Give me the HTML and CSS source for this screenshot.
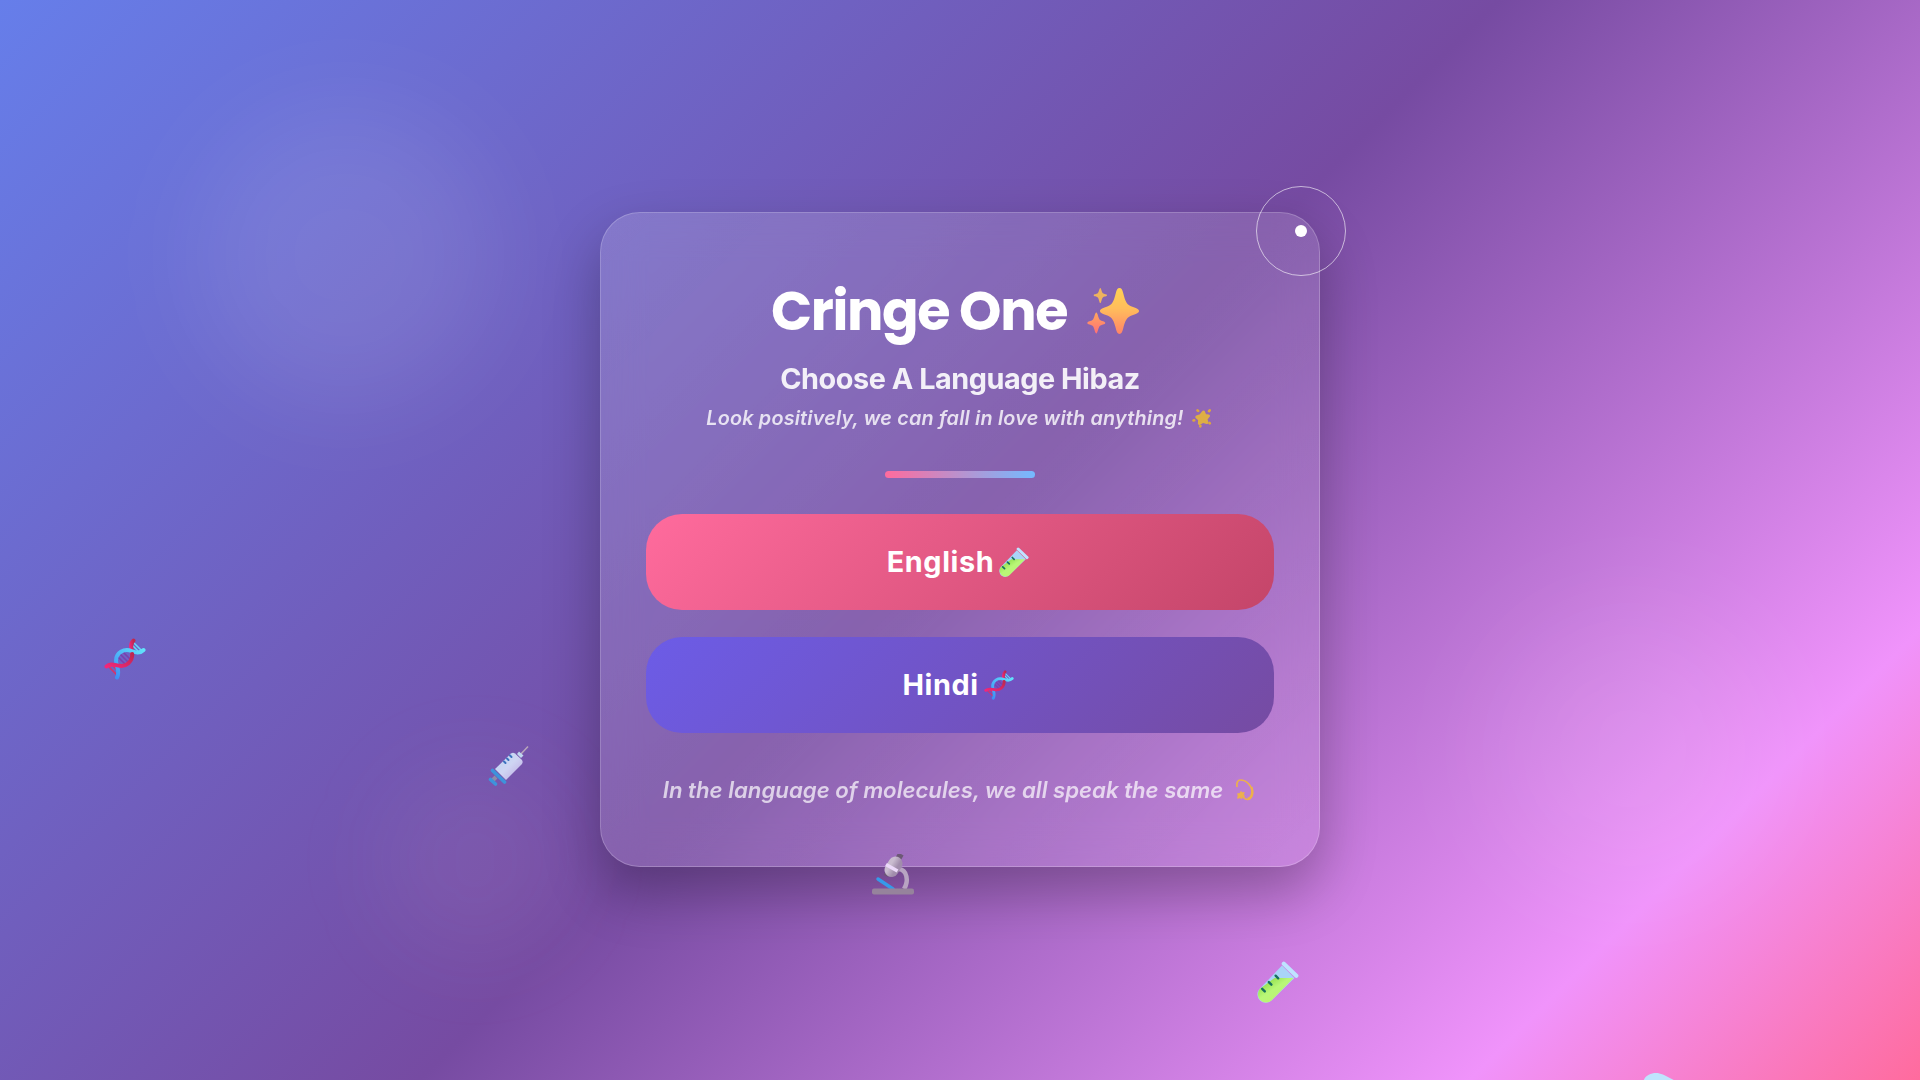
FILE: index.html
```html
<!DOCTYPE html>
<html lang="en">
<head>
<meta charset="utf-8">
<title>Cringe One</title>
<link rel="stylesheet" href="styles.css">
</head>
<body>
<svg class="defs" width="0" height="0">
  <defs>
    <linearGradient id="gold" x1="0" y1="0" x2="0" y2="1"><stop offset="0" stop-color="#ffd153"/><stop offset=".45" stop-color="#ffbd5c"/><stop offset="1" stop-color="#ff8467"/></linearGradient>
    <linearGradient id="coral" x1="0" y1="0" x2="0" y2="1"><stop offset="0" stop-color="#ffa75d"/><stop offset="1" stop-color="#ff7076"/></linearGradient>
    <linearGradient id="liquid" x1="0" y1="0" x2="1" y2="1"><stop offset="0" stop-color="#79cf31"/><stop offset=".45" stop-color="#b8f777"/><stop offset="1" stop-color="#c3f06c"/></linearGradient>
    <linearGradient id="blue" x1="0" y1="1" x2="1" y2="0"><stop offset="0" stop-color="#3c91f5"/><stop offset="1" stop-color="#62e3fb"/></linearGradient>
    <linearGradient id="red" x1="0" y1="1" x2="1" y2="0"><stop offset="0" stop-color="#f3267b"/><stop offset="1" stop-color="#bd294f"/></linearGradient>
    <linearGradient id="barrel" x1="0" y1="0" x2="1" y2="1"><stop offset="0" stop-color="#b9d6f1"/><stop offset=".5" stop-color="#cfd5f3"/><stop offset="1" stop-color="#bba4e0"/></linearGradient>
    <linearGradient id="metal" x1="0" y1="0" x2="1" y2="1"><stop offset="0" stop-color="#c9bccf"/><stop offset="1" stop-color="#a18dac"/></linearGradient>
    <symbol id="sparkles" viewBox="0 0 52 48">
      <path fill="url(#gold)" d="M32.500 1c2 0 2.900 1.800 3.800 5.500 2 8 3.500 11.500 9 13.300C49.500 21.300 52 22 52 24s-2.500 2.800-6.700 4.200c-5.500 1.800-7 5-9 12.800-.9 3.700-1.800 6-3.800 6s-2.900-2.300-3.800-6c-2-7.800-3.500-11-9-12.800C15.500 26.800 13 26 13 24s2.500-2.700 6.700-4.200c5.500-1.800 7-5.300 9-13.300.9-3.700 1.800-5.500 3.800-5.500z"/>
      <path fill="#eeb35e" d="M13.300 1c1 0 1.300 4.200 2.600 5.300C17 7.300 20 7 20 8.200s-3 1.100-4.100 2.200c-1.300 1.100-1.600 5.600-2.600 5.600s-1.300-4.500-2.600-5.600C9.600 9.300 6.700 9.400 6.700 8.200s2.900-.9 4-1.900C12 5.200 12.300 1 13.300 1z"/>
      <path fill="url(#coral)" d="M9.300 25.500c1.400 0 1.800 5.500 3.500 7.200 1.500 1.500 5.500 1.500 5.500 3.300s-4 1.500-5.500 3c-1.700 1.700-2.100 7.500-3.500 7.500S7.500 40.700 5.800 39C4.300 37.500.3 37.800.3 36s4-1.800 5.500-3.300c1.700-1.700 2.100-7.200 3.500-7.200z"/>
    </symbol>
    <symbol id="tube" viewBox="0 0 42 42">
      <path fill="#a9d4f8" d="M25 4.500 37.500 17 15 39a8.300 8.300 0 0 1-12.500-11z"/>
      <path fill="url(#liquid)" d="M17.500 16.500h19L14.500 38.800A8.200 8.200 0 0 1 2.700 27.500z" transform="translate(0 .6)"/>
      <path stroke="#bfe3ff" stroke-width="4.200" stroke-linecap="round" d="m26.800 2.800 12.500 12"/>
      <path stroke="#16705e" stroke-width="2.400" stroke-linecap="round" d="m5.200 27.800 2.600 2.600m4-9.300 2.600 2.600m4.200-9 2.600 2.600"/>
    </symbol>
    <symbol id="dna" viewBox="0 0 42 42">
      <path stroke="#dc3164" stroke-width="1.600" d="m5 29 8 8m-4-9 5 5"/>
      <path stroke="#7a3fae" stroke-width="1.600" d="m19 14 8 8m-11-6 9 9m-11-6 8 8"/>
      <path stroke="#66d9fa" stroke-width="1.600" d="m29 4 9 9m-10-6 6 6"/>
      <g fill="none" stroke-width="4" stroke-linecap="round">
        <path stroke="url(#red)" d="M29.500 2.500C25 7 28 11 28.200 16"/>
        <path stroke="url(#blue)" d="M39.500 12c-4 4-8 2.500-12 1C20 10 12 15 12 22.500 12 29 16.500 33 13 39.500"/>
        <path stroke="url(#red)" d="M28.200 16c.3 8-6.200 12.500-12.200 11.800C10 27 6.500 25 2.500 28.500"/>
      </g>
    </symbol>
    <symbol id="syringe" viewBox="0 0 42 42">
      <path stroke="#b9a6bb" stroke-width="1.500" d="m31 11 9-9.500"/>
      <path fill="#bfd6ef" d="m29 9 2-2.500 4.500 4L33 13z"/>
      <path fill="url(#barrel)" d="M23 8.500q2-1.500 4 0L34 15q1.500 2 0 4L18 35 7 24z"/>
      <path stroke="#8e8ba9" stroke-width="4" d="m8 32-3 3"/>
      <path stroke="#3e93db" stroke-width="3.600" stroke-linecap="round" d="m4.500 25.500 12 11.500M2.500 34.500l5 4.500"/>
      <path stroke="#3b72bf" stroke-width="2" stroke-linecap="round" d="m16 16.500 1.500 1.500m1.500-4.500 1.500 1.500m1.500-4.500 1.500 1.500"/>
    </symbol>
    <symbol id="microscope" viewBox="0 0 42 42">
      <path fill="none" stroke="#b8a4c2" stroke-width="4.500" d="M27 15c8 1 10 12 5 20"/>
      <path stroke="#359ae9" stroke-width="3.500" stroke-linecap="round" d="m6 25 15 10"/>
      <path stroke="#6c5875" stroke-width="6" d="m26 5 3-5"/>
      <path stroke="#6c5875" stroke-width="5" d="m15.500 19-1.500 3"/>
      <path stroke="url(#metal)" stroke-width="14" stroke-linecap="round" d="m23.500 9.500-4 6.500"/>
      <path stroke="#ecd9fa" stroke-width="3.500" d="m14 10.500 11.500 6.500"/>
      <rect y="34.500" width="42" height="6" rx="2" fill="#96839c"/>
    </symbol>
    <symbol id="star" viewBox="0 0 20 20">
      <path fill="#deae45" stroke="#deae45" stroke-width="3" stroke-linejoin="round" d="m11.500 4 1.500 3.500 3.500.4-2.600 3.100 1 3.500-4-1.300-3.500 2.300.2-4.100L4.800 9l3.800-1.400z"/>
      <path stroke="#dda63e" stroke-width="2.600" stroke-linecap="round" d="m5.500 2.300.6.600M17.700 2.300l-.7.800M1.500 12.500l.7-.2M17.500 15l.3.300M8.300 18.300l.1-.3"/>
    </symbol>
    <symbol id="dizzy" viewBox="0 0 18 22">
      <path fill="none" stroke="#edb04c" stroke-width="1.700" stroke-linecap="round" d="M1 7.500C.5 4 1.500 1 4.500 1c6 0 11.500 6 12 12 .2 4-2 7.500-5 7.500-1.500 0-2.500-.5-4-2"/>
      <path fill="#edb04c" stroke="#edb04c" stroke-linejoin="round" d="m5 12.500 1 1.500 2.200-.5-.8 2.200 1.200 1.600-2.300.3-.6 2.100-1.600-1.200-2.400.8.500-2.400-.5-2.200 2 .1z"/>
      <path fill="none" stroke="#edb04c" stroke-width="2.400" d="M15.500 8c1.500 5 1 11-4 12"/>
    </symbol>
    <symbol id="alembic" viewBox="0 0 42 42">
      <path fill="#bfe4fd" d="M1 11C2 4 8 1 14 1c6 0 9 3 26 11l-3 6-16-4-4 8 10 20H0l7-18z"/>
    </symbol>
  </defs>
</svg>

<div class="blob blob-one"></div>
<div class="blob blob-two"></div>
<div class="blob blob-three"></div>

<main class="card">
  <h1 class="title"><span>Cringe One</span><svg class="icon-sparkles"><use href="#sparkles"/></svg></h1>
  <h2 class="subtitle">Choose A Language Hibaz</h2>
  <p class="tagline"><span>Look positively, we can fall in love with anything!</span><svg class="icon-star"><use href="#star"/></svg></p>
  <div class="divider"></div>
  <div class="choices">
    <button class="choice choice-english"><span>English</span><svg class="icon-choice"><use href="#tube"/></svg></button>
    <button class="choice choice-hindi"><span>Hindi</span><svg class="icon-choice"><use href="#dna"/></svg></button>
  </div>
  <p class="motto"><span>In the language of molecules, we all speak the same</span><svg class="icon-dizzy"><use href="#dizzy"/></svg></p>
</main>

<svg class="float float-dna"><use href="#dna"/></svg>
<svg class="float float-syringe"><use href="#syringe"/></svg>
<svg class="float float-microscope"><use href="#microscope"/></svg>
<svg class="float float-tube"><use href="#tube"/></svg>
<svg class="float float-alembic"><use href="#alembic"/></svg>
<div class="cursor-ring"></div>
<div class="cursor-dot"></div>
</body>
</html>
```
FILE: styles.css
```css
* { box-sizing: border-box; margin: 0; padding: 0; }

body {
  position: relative;
  width: 100%;
  height: 100vh;
  overflow: hidden;
  display: flex;
  align-items: center;
  justify-content: center;
  padding-bottom: 1px;
  background: linear-gradient(135deg, #667eea 0%, #764ba2 50%, #f093fb 85%, #ff6b9d 100%);
  font-family: Inter, "Noto Sans", sans-serif;
  color: #fff;
}

.defs { position: absolute; }

/* soft glows behind the card */
.blob { position: absolute; border-radius: 50%; }
.blob-one { left: 195px; top: 105px; width: 300px; height: 300px; background: rgba(255, 255, 255, .09); filter: blur(50px); }
.blob-two { left: 1490px; top: 610px; width: 280px; height: 280px; background: rgba(255, 255, 255, .08); filter: blur(60px); }
.blob-three { left: 380px; top: 765px; width: 190px; height: 190px; background: rgba(255, 225, 225, .06); filter: blur(45px); }

.card {
  position: relative;
  width: 720px;
  height: 655px;
  padding: 61px 45px 0;
  display: flex;
  flex-direction: column;
  align-items: center;
  border: 1px solid rgba(255, 255, 255, .2);
  border-radius: 40px;
  background: linear-gradient(135deg, rgba(255, 255, 255, .15), rgba(255, 255, 255, .1));
  box-shadow: 0 25px 55px rgba(0, 0, 0, .28);
  backdrop-filter: blur(20px);
}

.title {
  display: flex;
  align-items: center;
  gap: 20px;
  height: 73px;
  padding-right: 10px;
  font: 700 54px/74px Poppins, Inter, sans-serif;
  letter-spacing: -1.400px;
}
.icon-sparkles { width: 52px; height: 48px; }

.subtitle {
  margin-top: 12px;
  font-size: 28.800px;
  font-weight: 650;
  line-height: 40px;
  letter-spacing: -.45px;
  color: rgba(255, 255, 255, .9);
}

.tagline, .motto { display: flex; align-items: center; font-style: italic; font-weight: 600; white-space: nowrap; }
.tagline { margin-top: 4px; gap: 8px; padding-right: 2px; font-size: 19.800px; line-height: 30px; letter-spacing: .2px; color: rgba(255, 255, 255, .8); }
.icon-star { width: 20px; height: 20px; }

.divider { margin-top: 38px; width: 150px; height: 7px; border-radius: 4px; background: linear-gradient(90deg, #ff6b9d, #74b9ff); }

.choices { width: 100%; margin-top: 36px; display: flex; flex-direction: column; gap: 27px; }
.choice {
  display: flex;
  align-items: center;
  justify-content: center;
  gap: 5px;
  width: 100%;
  height: 96px;
  padding-right: 4px;
  border: 0;
  border-radius: 36px;
  color: #fff;
  font: 650 28.800px/40px Inter, sans-serif;
  letter-spacing: .6px;
}
.choice-english { background: linear-gradient(135deg, #ff6b9d, #c44569); }
.choice-hindi { background: linear-gradient(135deg, #6c5ce7, #764ba2); }
.icon-choice { width: 30px; height: 30px; }

.motto { margin-top: 41px; gap: 13px; padding-right: 3px; font-size: 22.200px; line-height: 32px; color: rgba(255, 255, 255, .7); }
.icon-dizzy { width: 18px; height: 22px; }

.float { position: absolute; width: 42px; height: 42px; }
.float-dna { left: 104px; top: 638px; }
.float-syringe { left: 488px; top: 745px; }
.float-microscope { left: 872px; top: 854px; }
.float-tube { left: 1257px; top: 961px; }
.float-alembic { left: 1642px; top: 1072px; }

.cursor-ring { position: absolute; left: 1256px; top: 186px; width: 90px; height: 90px; border: 1px solid rgba(255, 255, 255, .6); border-radius: 50%; }
.cursor-dot { position: absolute; left: 1295px; top: 225px; width: 12px; height: 12px; border-radius: 50%; background: #fff; }
```
